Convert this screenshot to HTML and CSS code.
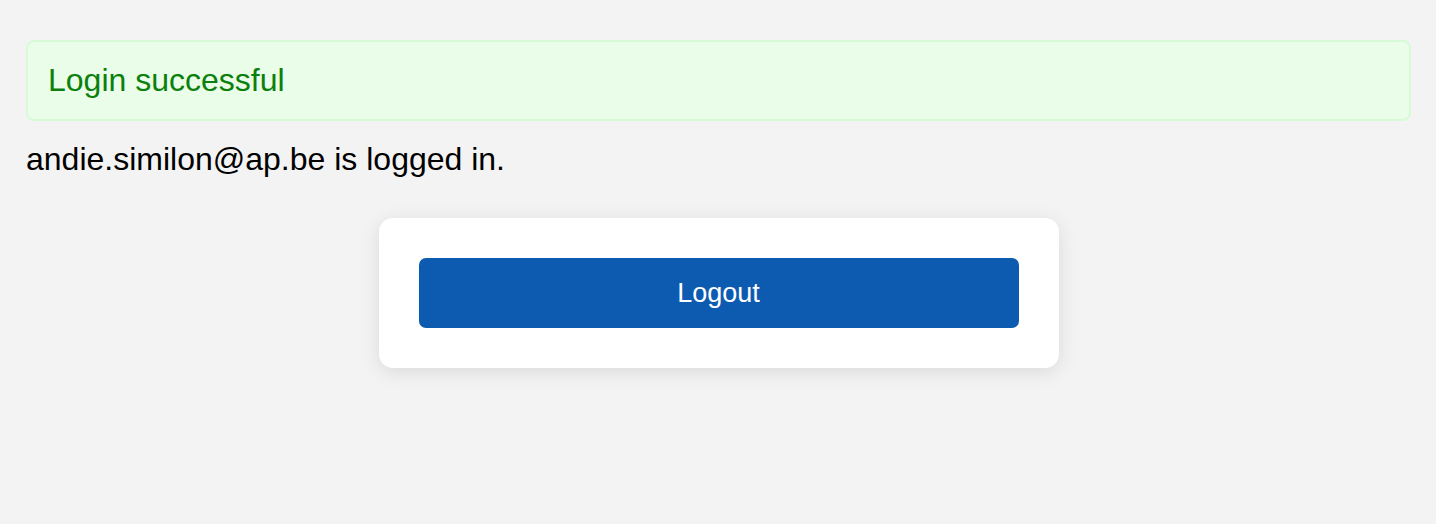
FILE: index.html
```html
<!DOCTYPE html>
<html lang="en">
<head>
<meta charset="utf-8">
<title>Logged in</title>
<link rel="stylesheet" href="styles.css">
</head>
<body>
<main class="page">
  <div class="alert">Login successful</div>
  <p class="status">andie.similon@ap.be is logged in.</p>
  <div class="card">
    <button class="logout" type="button">Logout</button>
  </div>
</main>
</body>
</html>
```
FILE: styles.css
```css
html, body {
  margin: 0;
  padding: 0;
}
html {
  background: #f3f3f3;
}
body {
  min-height: 524px;
  font-family: "Liberation Sans", Arial, Helvetica, sans-serif;
  color: #000;
}
.page {
  padding: 40px 25px 60px 26px;
  display: flex;
  flex-direction: column;
}
.alert {
  background: #e9fde9;
  border: 2px solid #d6fbd6;
  border-radius: 8px;
  color: #0b800b;
  font-size: 32px;
  line-height: 36px;
  padding: 20px 20px 21px 20px;
}
.status {
  margin: 19px 0 0 0;
  font-size: 32px;
  line-height: 38px;
}
.card {
  align-self: center;
  width: 600px;
  margin-top: 40px;
  padding: 40px;
  background: #fff;
  border-radius: 14px;
  box-shadow: 0 4px 20px rgba(0, 0, 0, 0.1);
}
.logout {
  display: block;
  width: 100%;
  height: 70px;
  border: 0;
  border-radius: 7px;
  background: #0d5bb0;
  color: #fff;
  font-family: inherit;
  font-size: 27px;
}
```
